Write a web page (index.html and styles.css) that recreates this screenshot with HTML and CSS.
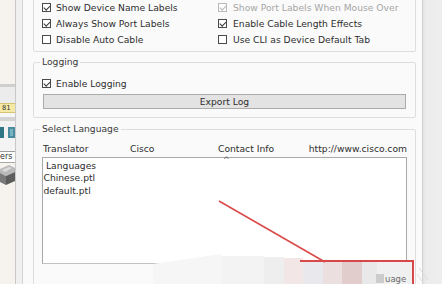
FILE: index.html
```html
<!DOCTYPE html>
<html lang="en">
<head>
<meta charset="utf-8">
<title>Preferences</title>
<link rel="stylesheet" href="styles.css">
</head>
<body>
<div class="screen">
  <aside class="side">
    <div class="side-top"></div>
    <div class="side-rule"></div>
    <div class="side-gray"></div>
    <div class="side-tag">81</div>
    <div class="side-white"></div>
    <div class="side-band"></div>
    <div class="side-light"></div>
    <div class="side-icons"><span class="ic ic-a"></span><span class="ic ic-b"></span></div>
    <div class="side-light2"></div>
    <div class="side-label">ers</div>
    <div class="side-device">
      <svg width="15" height="27" viewBox="0 0 15 27">
        <polygon points="0,6 9,2 15,5 15,9 6,13 0,10" fill="#b9b9b9"/>
        <polygon points="0,10 6,13 6,22 0,19" fill="#7a7a7a"/>
        <polygon points="6,13 15,9 15,18 6,22" fill="#5d5d5d"/>
        <polygon points="2,7 9,4 12,5 5,9" fill="#dcdcdc"/>
      </svg>
    </div>
    <div class="side-bottom"></div>
  </aside>
  <div class="gutter"></div>
  <main class="dialog">
    <div class="group group-top">
      <label class="opt"><span class="cb on"></span>Show Device Name Labels</label>
      <label class="opt disabled"><span class="cb on"></span>Show Port Labels When Mouse Over</label>
      <label class="opt"><span class="cb on"></span>Always Show Port Labels</label>
      <label class="opt"><span class="cb on"></span>Enable Cable Length Effects</label>
      <label class="opt"><span class="cb"></span>Disable Auto Cable</label>
      <label class="opt"><span class="cb"></span>Use CLI as Device Default Tab</label>
    </div>
    <fieldset class="group group-log">
      <legend>Logging</legend>
      <label class="opt"><span class="cb on"></span>Enable Logging</label>
      <button class="btn" type="button">Export Log</button>
    </fieldset>
    <fieldset class="group group-lang">
      <legend>Select Language</legend>
      <div class="lang-head">
        <span>Translator</span>
        <span>Cisco</span>
        <span>Contact Info</span>
        <span class="url">http://www.cisco.com</span>
      </div>
      <div class="listbox">
        <span class="caret">^</span>
        <div class="item head">Languages</div>
        <div class="item">Chinese.ptl</div>
        <div class="item">default.ptl</div>
      </div>
    </fieldset>
  </main>
  <div class="rightbar"></div>
</div>
<div class="mosaic">
  <svg width="442" height="284" viewBox="0 0 442 284">
    <polygon points="153,264 221,254 221,284 153,284" fill="#f6f6f6"/>
    <rect x="221" y="256" width="43" height="28" fill="#f3f3f3"/>
    <rect x="264" y="257" width="20" height="27" fill="#eeeeee"/>
    <rect x="284" y="258" width="19" height="26" fill="#f2e6e6"/>
    <rect x="303" y="260" width="20" height="24" fill="#e9e8ec"/>
    <rect x="323" y="260" width="19" height="24" fill="#ecdfdf"/>
    <rect x="342" y="260" width="20" height="24" fill="#e2cdcd"/>
    <rect x="362" y="260" width="15" height="24" fill="#e9e9e9"/>
    <rect x="377" y="260" width="36" height="24" fill="#f0f0f0"/>
    <rect x="376" y="274" width="8" height="9" fill="#cccccc"/>
    <text x="385" y="282" class="mosaic-text">uage</text>
    <line x1="219" y1="201" x2="325" y2="262" stroke="#dc4a4a" stroke-width="1.6"/>
    <polyline points="300,261 413,261 413,284" fill="none" stroke="#d84848" stroke-width="2"/>
    <line x1="419" y1="268" x2="428" y2="280" stroke="#dddddd" stroke-width="1"/>
    <line x1="417" y1="274" x2="424" y2="284" stroke="#e2e2e2" stroke-width="1"/>
  </svg>
</div>
</body>
</html>
```
FILE: styles.css
```css
* { box-sizing: border-box; }
html, body { margin: 0; padding: 0; }
body {
  width: 442px;
  height: 284px;
  overflow: hidden;
  position: relative;
  font-family: "DejaVu Sans", sans-serif;
  font-size: 9.2px;
  color: #2e2e2e;
  background: #fafafa;
}
.screen { display: flex; height: 284px; overflow: hidden; }

/* left application strip */
.side {
  width: 16px;
  flex: none;
  display: flex;
  flex-direction: column;
  background: #f6f3ee;
  border-right: 1px solid #c8c8c8;
  overflow: hidden;
}
.side-top { height: 84px; }
.side-rule { height: 3px; background: #cfcfcf; }
.side-gray { height: 16px; background: #ececec; }
.side-tag {
  height: 10px;
  background: #f6e9a6;
  border-top: 1px solid #d6c372;
  border-bottom: 1px solid #d6c372;
  font-family: "DejaVu Sans Mono", monospace;
  font-size: 7px;
  line-height: 8px;
  color: #333;
  padding-left: 2px;
  white-space: nowrap;
}
.side-white { height: 4px; background: #f7f7f7; }
.side-band { height: 4px; background: #d4d4d4; }
.side-light { height: 6px; background: #f1f1f1; }
.side-icons {
  height: 12px;
  display: flex;
  gap: 4px;
  background: #f1f1f1;
}
.ic { display: block; height: 11px; }
.ic-a { width: 4px; background: #2f7686; }
.ic-b { width: 7px; border: 2px solid #4a8c9f; background-color: #7bb3c3; }
.side-light2 { height: 13px; background: #f4f4f4; border-bottom: 1px solid #9c9c9c; }
.side-label {
  height: 11px;
  background: #fff;
  border-bottom: 1px solid #a8a8a8;
  font-size: 8px;
  line-height: 10px;
  color: #333;
  white-space: nowrap;
}
.side-device { height: 27px; background: #f6f3ee; line-height: 0; }
.side-bottom { flex: 1; }

.gutter {
  width: 7px;
  flex: none;
  background: #f0f0f0;
  border-right: 1px solid #d4d4d4;
}

/* dialog */
.dialog {
  width: 400px;
  height: 284px;
  flex: none;
  overflow: hidden;
  padding: 0 6px 0 10px;
  background: #fafafa;
  border-right: 1px solid #d2d2d2;
}
.group {
  border: 1px solid #dedede;
  border-radius: 2px;
  margin: 0;
  min-width: 0;
}
.group-top {
  margin-top: -12px;
  padding: 10px 8px 4px 8px;
  display: grid;
  grid-template-columns: 176px 1fr;
  grid-auto-rows: 16px;
}
.opt {
  display: flex;
  align-items: center;
  gap: 5px;
  height: 16px;
  white-space: nowrap;
}
.group-top .opt:nth-child(even) { gap: 6px; }
.opt.disabled { color: #a6a6a6; }
.cb {
  position: relative;
  width: 9px;
  height: 9px;
  flex: none;
  border: 1px solid #4a4a4a;
  background: #fff;
}
.cb.on::after {
  content: "";
  position: absolute;
  left: 2px;
  top: 0px;
  width: 2.5px;
  height: 5px;
  border: solid #333;
  border-width: 0 1.2px 1.2px 0;
  transform: rotate(45deg);
}
.disabled .cb { border-color: #b9b9b9; }
.disabled .cb.on::after { border-color: #b5b5b5; }

fieldset.group { padding: 0 8px 8px 8px; }
legend {
  margin-left: -2px;
  padding: 0 2px;
  line-height: 12px;
  color: #3a3a3a;
}
.group-log { margin-top: 4px; padding-top: 7px; }
.group-log .opt { margin-top: 7px; }
.btn {
  display: block;
  width: calc(100% - 2px);
  margin: 3px 1px 0 1px;
  height: 15px;
  padding: 0;
  font: inherit;
  color: #2e2e2e;
  background: #e3e3e3;
  border: 1px solid #ababab;
  border-radius: 0;
}

.group-lang { margin-top: 5px; }
fieldset.group-lang { padding-bottom: 30px; }
.lang-head {
  display: grid;
  grid-template-columns: 87px 88px 1fr auto;
  height: 16px;
  margin-top: 5px;
  align-items: center;
  padding-left: 1px;
  white-space: nowrap;
}
.lang-head .url { text-align: right; }
.listbox {
  position: relative;
  margin-top: 1px;
  height: 107px;
  background: #fff;
  border: 1px solid #a9a9a9;
  border-bottom-color: #c2c2c2;
  padding-top: 1.5px;
}
.item { line-height: 12.5px; padding-left: 0.5px; white-space: nowrap; }
.item.head { padding-left: 3px; }
.caret {
  position: absolute;
  left: 180px;
  top: -1px;
  font-size: 8px;
  line-height: 8px;
  color: #666;
}

.rightbar {
  flex: 1;
  background: linear-gradient(to right, #e2e2e2 0, #ececec 3px, #eeeeee 100%);
}

/* screenshot annotation / mosaic overlay */
.mosaic {
  position: absolute;
  left: 0;
  top: 0;
  width: 442px;
  height: 284px;
  pointer-events: none;
  line-height: 0;
}
.mosaic-text {
  font-family: "DejaVu Sans", sans-serif;
  font-size: 8.5px;
  fill: #6a6a6a;
}
```
